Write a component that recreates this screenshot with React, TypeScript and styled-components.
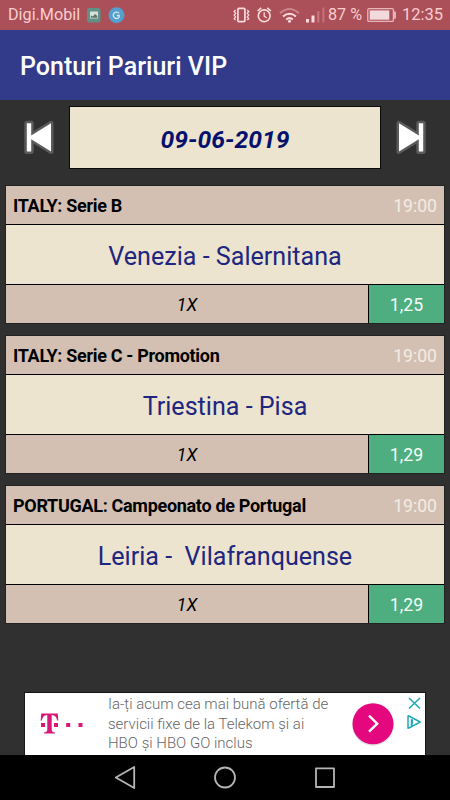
import React from "react";
import styled, { createGlobalStyle } from "styled-components";

const GlobalStyle = createGlobalStyle`
  * { box-sizing: border-box; }
  body { margin: 0; background: #303030; font-family: Roboto, sans-serif; }
`;

const Screen = styled.main`
  width: 450px;
  height: 800px;
  display: flex;
  flex-direction: column;
  overflow: hidden;
  background: #303030;
`;

const StatusBar = styled.div`
  height: 30px;
  flex: none;
  display: flex;
  align-items: center;
  padding: 0 7px 0 8px;
  background: #ab4f59;
  color: #f8cdd0;
  font-size: 16.5px;
  line-height: 30px;
  white-space: nowrap;
`;

const Carrier = styled.span`
  width: 79px;
  font-size: 16.2px;
`;

const StatusIcons = styled.svg`
  display: block;
  flex: none;
`;

const Spacer = styled.div`
  flex: 1;
`;

const Percent = styled.span`
  width: 38px;
  font-size: 16.2px;
`;

const Clock = styled.span`
  width: 41px;
  font-size: 16.5px;
`;

const AppBar = styled.header`
  height: 70px;
  flex: none;
  display: flex;
  align-items: center;
  padding: 3px 0 0 20px;
  background: #313b8a;
`;

const Title = styled.h1`
  margin: 0;
  color: #fff;
  font-size: 25px;
  font-weight: 500;
  line-height: 30px;
  letter-spacing: 0.03px;
`;

const DateRow = styled.section`
  height: 86px;
  flex: none;
  display: grid;
  grid-template-columns: 62px 310px 62px;
  justify-content: center;
  align-items: start;
  padding-top: 7px;
`;

const StepButton = styled.button`
  height: 61px;
  padding: 0;
  border: 0;
  background: none;
  display: flex;
  align-items: center;
  justify-content: center;
`;

const DateBox = styled.div`
  height: 61px;
  display: flex;
  align-items: center;
  justify-content: center;
  padding-top: 3px;
  background: #ece4ce;
  box-shadow: 0 0 0 1px #0a0a0a;
  color: #06116e;
  font-size: 24.7px;
  font-weight: 700;
  font-style: italic;
`;

const MatchList = styled.section`
  flex: none;
  display: flex;
  flex-direction: column;
  gap: 13px;
  padding: 0 6px;
`;

const MatchCard = styled.article`
  height: 137px;
  display: grid;
  grid-template-rows: 38px 59px 38px;
  row-gap: 1px;
  background: #000;
  box-shadow: 0 0 0 1px #222;
`;

const League = styled.div`
  display: flex;
  align-items: center;
  justify-content: space-between;
  padding: 1px 7px 0;
  background: #d3c0b3;
  color: #000;
  font-size: 18px;
  font-weight: 700;
  letter-spacing: -0.31px;
  white-space: nowrap;
`;

const Kickoff = styled.time`
  color: #f3ece4;
  font-size: 17.6px;
  font-weight: 400;
  letter-spacing: 0;
`;

const Teams = styled.div`
  display: flex;
  align-items: center;
  justify-content: center;
  padding-top: 3px;
  background: #ece4ce;
  color: #202680;
  font-size: 25.1px;
  white-space: pre;
`;

const TipRow = styled.div`
  display: grid;
  grid-template-columns: 362px 75px;
  column-gap: 1px;
`;

const Cell = styled.div<{ $odds?: boolean }>`
  display: flex;
  align-items: center;
  justify-content: center;
  padding-top: 1px;
  background: ${({ $odds }) => ($odds ? "#4fae80" : "#d3c0b3")};
  color: ${({ $odds }) => ($odds ? "#f5fff9" : "#000")};
  font-size: 17.7px;
  font-style: ${({ $odds }) => ($odds ? "normal" : "italic")};
`;

const AdBanner = styled.aside`
  width: 400px;
  height: 62px;
  flex: none;
  margin: auto auto 0;
  display: flex;
  background: #fff;
  box-shadow: 0 0 0 1px #151515;
`;

const AdLogo = styled.svg`
  width: 83px;
  height: 62px;
  flex: none;
`;

const AdText = styled.p`
  margin: 0;
  padding-top: 2px;
  width: 239px;
  color: #666;
  font-size: 15px;
  font-weight: 300;
  line-height: 19.5px;
  white-space: nowrap;
`;

const AdActions = styled.svg`
  width: 78px;
  height: 62px;
  flex: none;
`;

const NavBar = styled.nav`
  height: 45px;
  flex: none;
  display: flex;
  justify-content: center;
  gap: 60px;
  align-items: center;
  background: #000;
`;

const NavIcon = styled.svg`
  width: 40px;
  height: 45px;
  fill: none;
  stroke: #b5b5b5;
  stroke-width: 1.8;
  stroke-linejoin: round;
`;

const matches = [
  { league: "ITALY: Serie B", teams: "Venezia - Salernitana", odds: "1,25" },
  { league: "ITALY: Serie C - Promotion", teams: "Triestina - Pisa", odds: "1,29" },
  { league: "PORTUGAL: Campeonato de Portugal", teams: "Leiria -  Vilafranquense", odds: "1,29" },
];

function NotificationIcons() {
  return (
    <StatusIcons width="40" height="30" viewBox="87 0 40 30">
      <rect x="87" y="8" width="13.5" height="14.5" rx="2" fill="#5f9186" />
      <path d="M90 11.5h8v7h-8z" fill="#d9dfda" />
      <path d="M90.8 17.8v-2.3l2 .9 2.3-2.5 2.2 2.2v1.7z" fill="#58756e" />
      <circle cx="116.5" cy="15.2" r="8" fill="#539fcd" />
      <path d="M119 13.3a3.2 3.2 0 1 0 .2 3.7v-1.5h-2.5" fill="none" stroke="#d4e6ee" strokeWidth="1.4" />
    </StatusIcons>
  );
}

function SystemIcons() {
  return (
    <StatusIcons width="96" height="30" viewBox="232 0 96 30" fill="none" stroke="#ffdadd">
      <rect x="237.9" y="8.3" width="7" height="13.3" rx="1" strokeWidth="1.7" />
      <path d="M235.6 10l-1.4 1.5 1.4 1.8-1.4 1.8 1.4 1.8-1.4 1.7 1.4 1.4M247.3 10l1.4 1.5-1.4 1.8 1.4 1.8-1.4 1.8 1.4 1.7-1.4 1.4" strokeWidth="1.3" />
      <circle cx="264.2" cy="15.8" r="5.9" strokeWidth="1.6" />
      <path d="M257.6 11l3.6-3.2M267.2 7.8l3.7 3.2" strokeWidth="1.6" />
      <path d="M264.2 12.2v4l2.5 1.5" strokeWidth="1.3" />
      <path d="M280 13.2q9.5-8.5 19 0" stroke="#ce858b" strokeWidth="2" />
      <path d="M283 16.5q6.5-5.5 13 0M286.2 19.5q3.3-2.8 6.6 0" strokeWidth="2" />
      <circle cx="289.5" cy="21.2" r="1.5" fill="#ffdadd" stroke="none" />
      <g fill="#ffdadd" stroke="none">
        <rect x="306" y="19" width="3" height="3.5" />
        <rect x="311.5" y="15.5" width="3" height="7" />
        <rect x="317.3" y="11.2" width="2" height="11.3" fill="#ca7b81" />
        <rect x="322.4" y="7.5" width="2" height="15" fill="#c4737a" />
      </g>
    </StatusIcons>
  );
}

function BatteryIcon() {
  return (
    <StatusIcons width="36" height="30" viewBox="366 0 36 30">
      <rect x="367.8" y="8.7" width="25.6" height="12.7" rx="1.2" fill="none" stroke="#e9b6ba" strokeWidth="1.3" />
      <rect x="369.7" y="10.4" width="19.6" height="9.3" fill="#f2d9dc" />
      <path d="M394.4 11.8h1v6.5h-1z" fill="none" stroke="#edb9bd" />
    </StatusIcons>
  );
}

function SkipIcon({ forward = false }: { forward?: boolean }) {
  return (
    <svg width="62" height="61" viewBox={forward ? "380 107 62 61" : "8 107 62 61"}>
      <path
        d={forward ? "M399 123.3v28.2l19.8-12.3v12.3h4.4v-28.2h-4.4v12.3z" : "M51 123.3v28.2l-19.8-12.3v12.3h-4.4v-28.2h4.4v12.3z"}
        fill="#fff"
        stroke="#5b5b5b"
        strokeWidth="5"
        strokeLinejoin="round"
        paintOrder="stroke"
      />
    </svg>
  );
}

export default function App() {
  return (
    <Screen>
      <GlobalStyle />
      <StatusBar>
        <Carrier>Digi.Mobil</Carrier>
        <NotificationIcons />
        <Spacer />
        <SystemIcons />
        <Percent>87 %</Percent>
        <BatteryIcon />
        <Clock>12:35</Clock>
      </StatusBar>
      <AppBar><Title>Ponturi Pariuri VIP</Title></AppBar>
      <DateRow>
        <StepButton aria-label="Previous day"><SkipIcon /></StepButton>
        <DateBox>09-06-2019</DateBox>
        <StepButton aria-label="Next day"><SkipIcon forward /></StepButton>
      </DateRow>
      <MatchList>
        {matches.map((match) => (
          <MatchCard key={match.league}>
            <League>{match.league}<Kickoff>19:00</Kickoff></League>
            <Teams>{match.teams}</Teams>
            <TipRow>
              <Cell>1X</Cell>
              <Cell $odds>{match.odds}</Cell>
            </TipRow>
          </MatchCard>
        ))}
      </MatchList>
      <AdBanner>
        <AdLogo viewBox="25 693 83 62" fill="#d91679">
          <path d="M41.2 713.5h16.6l.5 7h-1.2c-.4-3.5-2.1-5.4-5.4-5.6v14.4c0 2.2.8 3 3.3 3.1v1.2h-11v-1.2c2.5-.1 3.3-.9 3.3-3.1v-14.4c-3.3.2-5 2.1-5.4 5.6h-1.2z" />
          <path d="M41 723h4v4h-4zM54 723h4v4h-4zM66.2 723h4v4h-4zM78.5 723h4v4h-4z" />
        </AdLogo>
        <AdText>Ia-ți acum cea mai bună ofertă de<br />servicii fixe de la Telekom și ai<br />HBO și HBO GO inclus</AdText>
        <AdActions viewBox="347 693 78 62" fill="none">
          <circle cx="373" cy="725" r="20.7" fill="#dedede" />
          <circle cx="373" cy="723.8" r="20.5" fill="#e5077e" />
          <path d="M369 715.7l8.2 8-8.2 8" stroke="#fff" strokeWidth="2.4" />
          <path d="M409 698l11 10.5m0-10.5l-11 10.5" stroke="#20a9b8" strokeWidth="1.6" />
          <path d="M408 715.5v12.8l3.5-1.6v-7.5M408 715.5l12.2 6.5-8.7 4.7M412.2 719.2v5.2" stroke="#20a9b8" strokeWidth="1.5" strokeLinejoin="round" />
        </AdActions>
      </AdBanner>
      <NavBar>
        <NavIcon viewBox="105 755 40 45"><path d="M134.2 767v21l-18.4-10.5z" /></NavIcon>
        <NavIcon viewBox="205 755 40 45"><circle cx="225" cy="777.5" r="10" /></NavIcon>
        <NavIcon viewBox="305 755 40 45"><rect x="316" y="768.3" width="18" height="18.7" /></NavIcon>
      </NavBar>
    </Screen>
  );
}
